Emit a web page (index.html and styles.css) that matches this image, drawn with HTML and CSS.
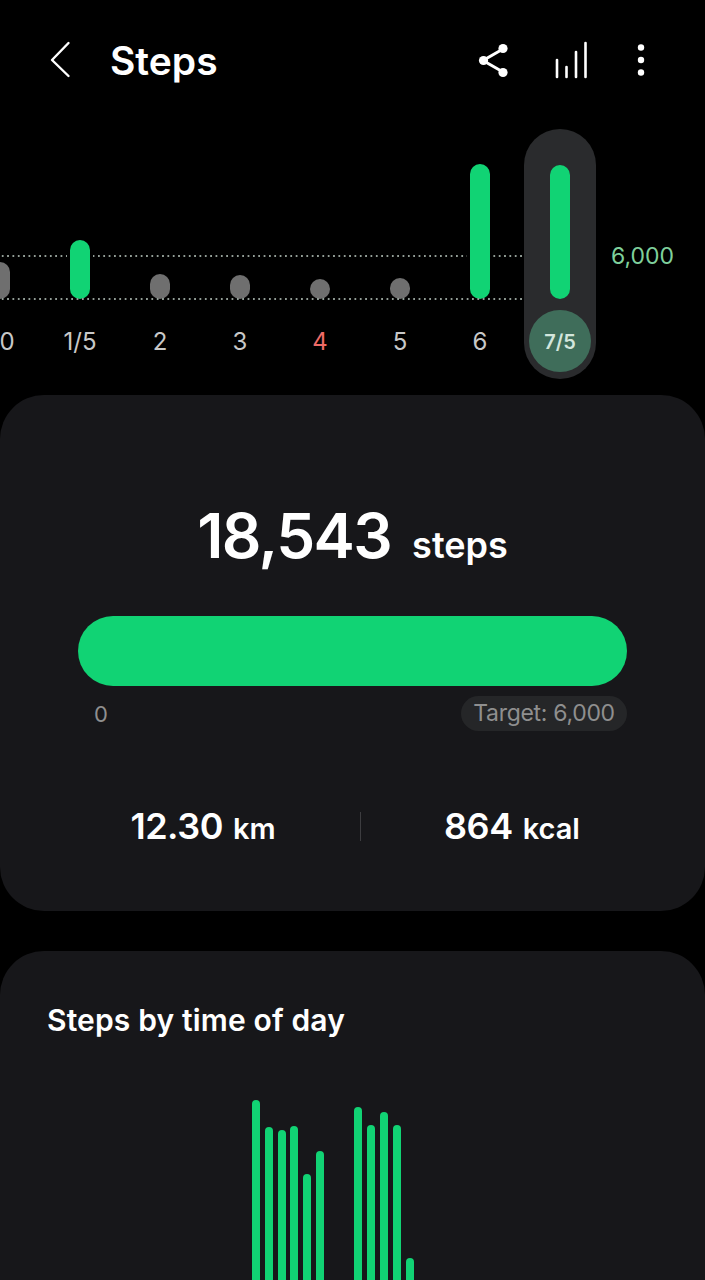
FILE: index.html
```html
<!DOCTYPE html>
<html lang="en">
<head>
    <meta charset="UTF-8">
    <meta name="viewport" content="width=device-width, initial-scale=1.0">
    <title>Steps</title>
    <link rel="stylesheet" href="styles.css">
</head>
<body>

    <!-- Top bar -->
    <header class="top-bar">
        <svg class="back-icon" width="24" height="40" viewBox="0 0 24 40" fill="none" stroke="#fff" stroke-width="2.4" stroke-linecap="round" stroke-linejoin="round">
            <path d="M20.5 3 L4 20 L20.5 36"/>
        </svg>
        <h1 class="title">Steps</h1>
        <svg class="share-icon" width="32" height="36" viewBox="0 0 32 36">
            <path d="M25 7 L5 18.5 L25 30" fill="none" stroke="#fff" stroke-width="3"/>
            <circle cx="25" cy="6.5" r="4.6" fill="#fff"/>
            <circle cx="5.5" cy="18.5" r="4.6" fill="#fff"/>
            <circle cx="25" cy="30.5" r="4.6" fill="#fff"/>
        </svg>
        <svg class="stats-icon" width="34" height="38" viewBox="0 0 34 38" fill="none" stroke="#fff" stroke-width="2.6" stroke-linecap="round">
            <path d="M3 36 V19"/>
            <path d="M12.5 36 V26"/>
            <path d="M22 36 V11"/>
            <path d="M31.5 36 V2"/>
        </svg>
        <svg class="more-icon" width="10" height="36" viewBox="0 0 10 36" fill="#fff">
            <circle cx="5" cy="5.5" r="3.2"/>
            <circle cx="5" cy="18" r="3.2"/>
            <circle cx="5" cy="30.5" r="3.2"/>
        </svg>
    </header>

    <!-- Daily chart -->
    <section class="day-chart">
        <div class="dots dots-target"></div>
        <div class="dots dots-base"></div>
        <div class="day-columns">
            <div class="day">
                <div class="bar-area"><div class="bar gray" style="height: 37px"></div></div>
                <div class="day-label first-label">0</div>
            </div>
            <div class="day">
                <div class="bar-area"><div class="bar green" style="height: 59px"></div></div>
                <div class="day-label">1/5</div>
            </div>
            <div class="day">
                <div class="bar-area"><div class="bar gray" style="height: 25px"></div></div>
                <div class="day-label">2</div>
            </div>
            <div class="day">
                <div class="bar-area"><div class="bar gray" style="height: 24px"></div></div>
                <div class="day-label">3</div>
            </div>
            <div class="day">
                <div class="bar-area"><div class="bar gray" style="height: 20px"></div></div>
                <div class="day-label sunday">4</div>
            </div>
            <div class="day">
                <div class="bar-area"><div class="bar gray" style="height: 21px"></div></div>
                <div class="day-label">5</div>
            </div>
            <div class="day">
                <div class="bar-area"><div class="bar green" style="height: 135px"></div></div>
                <div class="day-label">6</div>
            </div>
            <div class="day-selected">
                <div class="bar-area-selected"><div class="bar green-flat" style="height: 134px"></div></div>
                <div class="day-circle">7/5</div>
            </div>
        </div>
        <div class="target-value">6,000</div>
    </section>

    <!-- Today summary -->
    <section class="card summary">
        <div class="step-total">
            <span class="step-count">18,543</span>
            <span class="step-unit">steps</span>
        </div>
        <div class="progress"></div>
        <div class="progress-labels">
            <span class="progress-zero">0</span>
            <span class="target-pill">Target: 6,000</span>
        </div>
        <div class="stats">
            <div class="stat stat-distance"><span class="stat-value">12.30</span> <span class="stat-unit">km</span></div>
            <div class="stat-divider"></div>
            <div class="stat stat-energy"><span class="stat-value">864</span> <span class="stat-unit">kcal</span></div>
        </div>
    </section>

    <!-- Steps by hour -->
    <section class="card by-time">
        <h2 class="card-title">Steps by time of day</h2>
        <div class="hour-bars">
            <div class="hour-bar" style="height: 280px"></div>
            <div class="hour-bar" style="height: 253px"></div>
            <div class="hour-bar" style="height: 250px"></div>
            <div class="hour-bar" style="height: 254px"></div>
            <div class="hour-bar" style="height: 206px"></div>
            <div class="hour-bar" style="height: 229px"></div>
            <div class="hour-bar empty"></div>
            <div class="hour-bar empty"></div>
            <div class="hour-bar" style="height: 273px"></div>
            <div class="hour-bar" style="height: 255px"></div>
            <div class="hour-bar" style="height: 268px"></div>
            <div class="hour-bar" style="height: 255px"></div>
            <div class="hour-bar" style="height: 122px"></div>
        </div>
    </section>

</body>
</html>
```

FILE: styles.css
```css
html, body {
    height: 1280px;
    overflow: hidden;
}
body {
    margin: 0;
    background-color: #000;
    color: #fff;
    font-family: Inter, "Noto Sans", sans-serif;
}

/* Top bar */
.top-bar {
    display: flex;
    align-items: center;
    height: 120px;
    padding-left: 48px;
}
.back-icon {
    margin-right: 38px;
}
.title {
    flex: 1;
    margin: 0;
    font-size: 39px;
    font-weight: 600;
}
.share-icon {
    margin-right: 44px;
}
.stats-icon {
    margin-right: 48px;
}
.more-icon {
    margin-right: 59px;
}

/* Daily chart */
.day-chart {
    position: relative;
    height: 275px;
    overflow: hidden;
}
.dots {
    position: absolute;
    left: 0;
    width: 524px;
    height: 2px;
    background-image: radial-gradient(circle, #939e97 0.9px, transparent 1.1px);
    background-size: 5.35px 2px;
}
.dots-target {
    top: 135px;
}
.dots-base {
    top: 178px;
    z-index: 2;
}
.day-columns {
    display: flex;
    align-items: flex-start;
    margin-left: -40px;
}
.day {
    flex: none;
    width: 80px;
}
.bar-area {
    display: flex;
    align-items: flex-end;
    justify-content: center;
    height: 179px;
}
.bar {
    position: relative;
    width: 20px;
    border-radius: 10px;
}
.gray {
    background-color: #6f6f6f;
}
.green {
    background-color: #11d374;
    box-shadow: 0 0 0 3px #000;
}
.green-flat {
    background-color: #11d374;
}
.day-label {
    margin-top: 29px;
    line-height: 28px;
    text-align: center;
    font-size: 24px;
    color: #c8c8c8;
}
.first-label {
    padding-left: 14px;
}
.sunday {
    color: #ee6a66;
}
.day-selected {
    position: relative;
    z-index: 3;
    flex: none;
    display: flex;
    flex-direction: column;
    align-items: center;
    box-sizing: border-box;
    width: 72px;
    height: 250px;
    margin: 9px 4px 0;
    background-color: #2a2b2d;
    border-radius: 36px;
}
.bar-area-selected {
    display: flex;
    align-items: flex-end;
    height: 170px;
}
.day-circle {
    display: flex;
    align-items: center;
    justify-content: center;
    box-sizing: border-box;
    width: 62px;
    height: 62px;
    margin-top: 11px;
    padding-top: 1px;
    border-radius: 50%;
    background-color: #3f6d5a;
    color: #d3e6dc;
    font-size: 20px;
    font-weight: 600;
}
.target-value {
    position: absolute;
    top: 122px;
    left: 611px;
    font-size: 23px;
    line-height: 28px;
    color: #7fd09c;
}

/* Cards */
.card {
    background-color: #17171a;
    border-radius: 44px;
}
.summary {
    box-sizing: border-box;
    height: 516px;
    padding: 104px 78px 0;
}
.step-total {
    display: flex;
    align-items: baseline;
    justify-content: center;
    gap: 21px;
    height: 76px;
    line-height: 74px;
}
.step-count {
    font-size: 62px;
    font-weight: 600;
    letter-spacing: -1.6px;
}
.step-unit {
    font-size: 36px;
    font-weight: 600;
}
.progress {
    height: 70px;
    margin-top: 41px;
    background-color: #11d374;
    border-radius: 35px;
}
.progress-labels {
    display: flex;
    align-items: center;
    justify-content: space-between;
    margin-top: 10px;
}
.progress-zero {
    margin-left: 16px;
    font-size: 22px;
    color: #8f8f8f;
}
.target-pill {
    box-sizing: border-box;
    width: 166px;
    height: 35px;
    line-height: 35px;
    text-align: center;
    background-color: #252628;
    border-radius: 18px;
    font-size: 23px;
    letter-spacing: -0.3px;
    color: #8f8f8f;
}
.stats {
    display: flex;
    align-items: center;
    margin: 73px 0 0 -30px;
}
.stat {
    flex: none;
    text-align: center;
    font-weight: 600;
    white-space: nowrap;
}
.stat-distance {
    width: 310px;
}
.stat-energy {
    width: 298px;
    padding-left: 2px;
}
.stat-value {
    font-size: 36px;
    letter-spacing: -0.5px;
}
.stat-unit {
    margin-left: 6px;
    font-size: 29px;
}
.stat-divider {
    flex: none;
    width: 1px;
    height: 29px;
    margin-left: 2px;
    background-color: #3d3d40;
}
.by-time {
    box-sizing: border-box;
    height: 329px;
    margin-top: 40px;
    padding: 51px 47px 0;
    overflow: hidden;
    border-radius: 44px 44px 0 0;
}
.card-title {
    margin: 0;
    font-size: 30px;
    line-height: 36px;
    font-weight: 600;
    letter-spacing: 0.15px;
}
.hour-bars {
    display: flex;
    align-items: flex-end;
    gap: 4.8px;
    height: 280px;
    margin-top: 62px;
    padding-left: 205px;
}
.hour-bar {
    flex: none;
    width: 8px;
    background-color: #11d374;
    border-radius: 4px;
}
.empty {
    background-color: transparent;
}
```
